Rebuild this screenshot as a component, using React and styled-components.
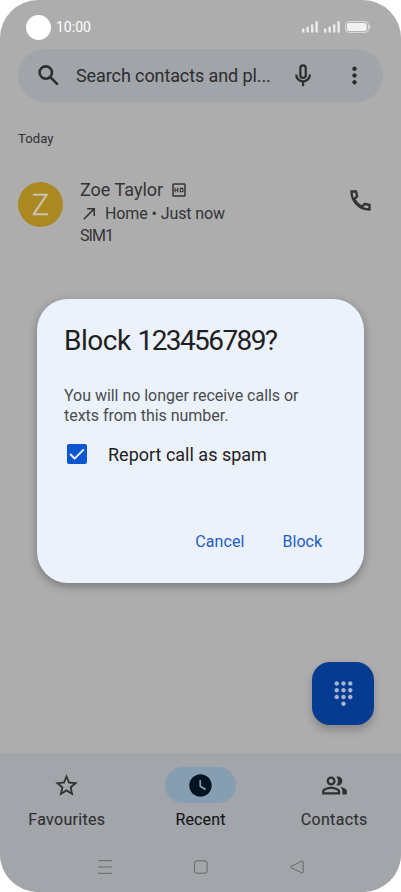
import React, { useState } from 'react';
import styled, { createGlobalStyle } from 'styled-components';
import {
  MdMoreVert,
  MdOutlineHd,
  MdCallMade,
  MdDialpad,
  MdStarBorder,
  MdWatchLater,
  MdOutlinePeopleAlt,
} from 'react-icons/md';

const GlobalStyle = createGlobalStyle`
  * { box-sizing: border-box; }
  body {
    margin: 0;
    background: #fff;
    font-family: Roboto, 'Noto Sans', sans-serif;
  }
  button {
    font: inherit;
    color: inherit;
    border: 0;
    padding: 0;
    background: none;
    cursor: pointer;
  }
  svg { display: block; flex: none; }
`;

const Screen = styled.div`
  position: relative;
  display: flex;
  flex-direction: column;
  width: 401px;
  height: 892px;
  border-radius: 38px;
  overflow: hidden;
  background: #adadad;
  color: #333436;
`;

const Text = styled.span`
  font-size: ${({ size }) => size}px;
  font-weight: ${({ weight }) => weight || 400};
  letter-spacing: ${({ spacing }) => spacing || 0}px;
  line-height: ${({ line }) => (line ? `${line}px` : 'normal')};
  -webkit-text-stroke: ${({ heavy }) => heavy || 0}px currentColor;
  white-space: nowrap;
`;

const StatusBar = styled.div`
  display: flex;
  align-items: center;
  height: 49px;
  padding: 5px 30px 0 26px;
  color: #fff;
`;

const Camera = styled.div`
  width: 25px;
  height: 25px;
  margin-right: 5px;
  border-radius: 50%;
  background: #fff;
`;

const StatusIcons = styled.div`
  display: flex;
  align-items: center;
  gap: 5.4px;
  margin-left: auto;
`;

const SearchBar = styled.div`
  display: flex;
  align-items: center;
  height: 53px;
  margin: 0 18px;
  padding: 0 15px 0 17px;
  border-radius: 27px;
  background: #a1a4a9;
  color: #2c2d2f;
`;

const SearchText = styled(Text)`
  flex: 1;
  margin-left: 14px;
`;

const SearchActions = styled.div`
  display: flex;
  gap: 24px;
`;

const Section = styled.h2`
  display: flex;
  margin: 28px 18px 0;
  height: 18px;
`;

const CallRow = styled.div`
  display: flex;
  margin-top: 30px;
  padding: 0 27px 0 18px;
`;

const Avatar = styled.div`
  display: flex;
  align-items: center;
  justify-content: center;
  width: 45px;
  height: 45px;
  margin: 4px 17px 0 0;
  border-radius: 50%;
  background: #ab8922;
  color: #c9c5b8;
`;

const CallInfo = styled.div`
  flex: 1;
  display: flex;
  flex-direction: column;
`;

const Line = styled.div`
  display: flex;
  align-items: center;
  gap: ${({ gap }) => gap}px;
`;

const CallButton = styled.button`
  align-self: flex-start;
  margin-top: 9px;
`;

const Fab = styled.button`
  position: absolute;
  right: 27px;
  bottom: 167px;
  display: flex;
  align-items: center;
  justify-content: center;
  width: 62px;
  height: 63px;
  border-radius: 18px;
  background: #053b91;
  color: #a9b5cd;
  box-shadow: 0 5px 9px rgba(0, 0, 0, 0.22);
`;

const BottomBar = styled.div`
  margin-top: auto;
  height: 139px;
  background: #a2a5aa;
`;

const Tabs = styled.div`
  display: grid;
  grid-template-columns: repeat(3, 1fr);
  height: 90px;
  padding-top: 14px;
`;

const Tab = styled.button`
  display: flex;
  flex-direction: column;
  align-items: center;
  gap: 7px;
  color: ${({ active }) => (active ? '#141516' : '#2f3032')};
`;

const TabIcon = styled.div`
  display: flex;
  align-items: center;
  justify-content: center;
  width: 71px;
  height: 36px;
  border-radius: 18px;
  background: ${({ active }) => (active ? '#859eb2' : 'transparent')};
  color: ${({ active }) => (active ? '#021322' : '#2f3032')};
`;

const SystemNav = styled.div`
  display: flex;
  align-items: center;
  justify-content: center;
  gap: 82px;
  height: 49px;
  padding-bottom: 1px;
  color: #66686b;
`;

const Dialog = styled.div`
  position: absolute;
  top: 299px;
  left: 37px;
  display: flex;
  flex-direction: column;
  width: 327px;
  height: 284px;
  padding: 25px 27px 24px;
  border-radius: 31px;
  background: #ebf2fb;
  color: #1f2022;
  box-shadow: 0 3px 10px rgba(0, 0, 0, 0.32);
`;

const Title = styled.div`
  display: flex;
  gap: 7px;
`;

const Message = styled.p`
  display: flex;
  flex-direction: column;
  margin: 28px 0 0;
  color: #4a4c50;
`;

const Option = styled.label`
  display: flex;
  align-items: center;
  height: 24px;
  margin-top: 16px;
  padding-left: 3px;
  gap: 21px;
  cursor: pointer;
`;

const HiddenInput = styled.input`
  display: none;
`;

const Box = styled.span`
  width: 20px;
  height: 20px;
  border-radius: 2px;
  border: 2px solid #0b57d0;
  background: ${({ checked }) => (checked ? '#0b57d0' : 'transparent')};
  color: ${({ checked }) => (checked ? '#ebf2fb' : 'transparent')};
`;

const Actions = styled.div`
  display: flex;
  justify-content: flex-end;
  gap: 38px;
  margin-top: auto;
  padding: 0 15px 7px 0;
  color: #1d5dc4;
`;

const Signal = () => (
  <svg width="16" height="12" viewBox="0 0 16 12" fill="#ececec">
    <rect x="0" y="7.5" width="2.4" height="4" />
    <rect x="4.5" y="5.7" width="2.4" height="5.8" />
    <rect x="9" y="3.4" width="2.4" height="8.1" />
    <rect x="13.4" y="0.2" width="2.4" height="11.3" />
  </svg>
);

const Battery = () => (
  <svg width="26" height="12" viewBox="0 0 26 12">
    <rect x="0.6" y="0.6" width="22.8" height="10.8" rx="3" fill="none" stroke="#dedede" />
    <rect x="2" y="2" width="19.6" height="8" rx="1.8" fill="#f1f1f1" />
    <path d="M24.2 4v4c1-.4 1.2-1 1.2-2s-.2-1.6-1.2-2z" fill="#dedede" />
  </svg>
);

const SearchIcon = () => (
  <svg width="27" height="27" viewBox="0 0 24 24" fill="none" stroke="currentColor" strokeWidth="2.3">
    <circle cx="9.6" cy="9.4" r="5.5" />
    <path d="m13.6 13.4 6.7 6.7" />
  </svg>
);

const MicIcon = () => (
  <svg width="27" height="27" viewBox="0 0 24 24" fill="none" stroke="currentColor" strokeWidth="2">
    <rect x="9.2" y="3" width="4.8" height="11.2" rx="2.4" />
    <path d="M5.5 11.2c0 3.3 2.7 6 6.1 6s6.1-2.7 6.1-6M11.6 17.2v4.4" />
  </svg>
);

const CallIcon = () => (
  <svg width="27" height="27" viewBox="0 0 24 24" fill="none" stroke="currentColor" strokeWidth="2.1">
    <path d="M4 4h4l1 4.3-2.6 2.6c1.7 3 3.9 5.1 6.8 6.7l2.6-2.6L20 16v4C10.8 20 4 12.6 4 4z" />
  </svg>
);

const tabs = [
  { name: 'Favourites', Icon: MdStarBorder, spacing: 0.3 },
  { name: 'Recent', Icon: MdWatchLater, spacing: 0.15 },
  { name: 'Contacts', Icon: MdOutlinePeopleAlt, spacing: 0.32 },
];

const App = () => {
  const [tab, setTab] = useState('Recent');
  const [report, setReport] = useState(true);

  return (
    <>
      <GlobalStyle />
      <Screen>
        <StatusBar>
          <Camera />
          <Text size={14}>10:00</Text>
          <StatusIcons>
            <Signal />
            <Signal />
            <Battery />
          </StatusIcons>
        </StatusBar>

        <SearchBar>
          <SearchIcon />
          <SearchText size={18} spacing={-0.1}>Search contacts and pl...</SearchText>
          <SearchActions>
            <MicIcon />
            <MdMoreVert size={27} />
          </SearchActions>
        </SearchBar>

        <Section>
          <Text size={13} line={18} spacing={0.1} heavy={0.1}>Today</Text>
        </Section>

        <CallRow>
          <Avatar>
            <Text size={29} weight={300} heavy={0.3}>Z</Text>
          </Avatar>
          <CallInfo>
            <Line gap={7}>
              <Text size={18} line={24}>Zoe Taylor</Text>
              <MdOutlineHd size={18} />
            </Line>
            <Line gap={6}>
              <MdCallMade size={19} />
              <Text size={16} line={23} spacing={-0.1}>Home • Just now</Text>
            </Line>
            <Text size={16} line={22} spacing={-0.9}>SIM1</Text>
          </CallInfo>
          <CallButton aria-label="Call">
            <CallIcon />
          </CallButton>
        </CallRow>

        <BottomBar>
          <Tabs>
            {tabs.map(({ name, Icon, spacing }) => (
              <Tab key={name} active={tab === name ? 1 : 0} onClick={() => setTab(name)}>
                <TabIcon active={tab === name ? 1 : 0}>
                  <Icon size={27} />
                </TabIcon>
                <Text size={16} line={20} spacing={spacing} heavy={0.12}>{name}</Text>
              </Tab>
            ))}
          </Tabs>
          <SystemNav>
            <svg width="14" height="14" viewBox="0 0 14 14" stroke="currentColor" fill="none">
              <path d="M0 .7h14M0 7h14M0 13.3h14" />
            </svg>
            <svg width="14" height="14" viewBox="0 0 14 14" stroke="currentColor" fill="none">
              <rect x="0.5" y="0.8" width="12.6" height="12.4" rx="2.4" />
            </svg>
            <svg width="14" height="14" viewBox="0 0 14 14" stroke="currentColor" fill="none">
              <path d="M12.2 .9 1.2 6.3q-1 .7 0 1.4l11 5.4q.9.2.9-.7V1.6q0-.9-.9-.7z" />
            </svg>
          </SystemNav>
        </BottomBar>

        <Fab aria-label="Dialpad">
          <MdDialpad size={27} />
        </Fab>

        <Dialog role="dialog">
          <Title>
            <Text size={28} line={34} spacing={-0.5}>Block</Text>
            <Text size={28} line={34} spacing={-1.6}>123456789?</Text>
          </Title>
          <Message>
            <Text size={16} line={20} spacing={-0.03}>You will no longer receive calls or</Text>
            <Text size={16} line={20} spacing={-0.03}>texts from this number.</Text>
          </Message>
          <Option>
            <HiddenInput type="checkbox" checked={report} onChange={() => setReport(!report)} />
            <Box checked={report}>
              <svg width="16" height="16" viewBox="0 0 16 16" fill="none" stroke="currentColor" strokeWidth="2">
                <path d="m1.2 8 4.4 4.6 9.2-9.2" />
              </svg>
            </Box>
            <Text size={18}>Report call as spam</Text>
          </Option>
          <Actions>
            <button><Text size={16} line={20} spacing={0.1}>Cancel</Text></button>
            <button><Text size={16} line={20}>Block</Text></button>
          </Actions>
        </Dialog>
      </Screen>
    </>
  );
};

export default App;
